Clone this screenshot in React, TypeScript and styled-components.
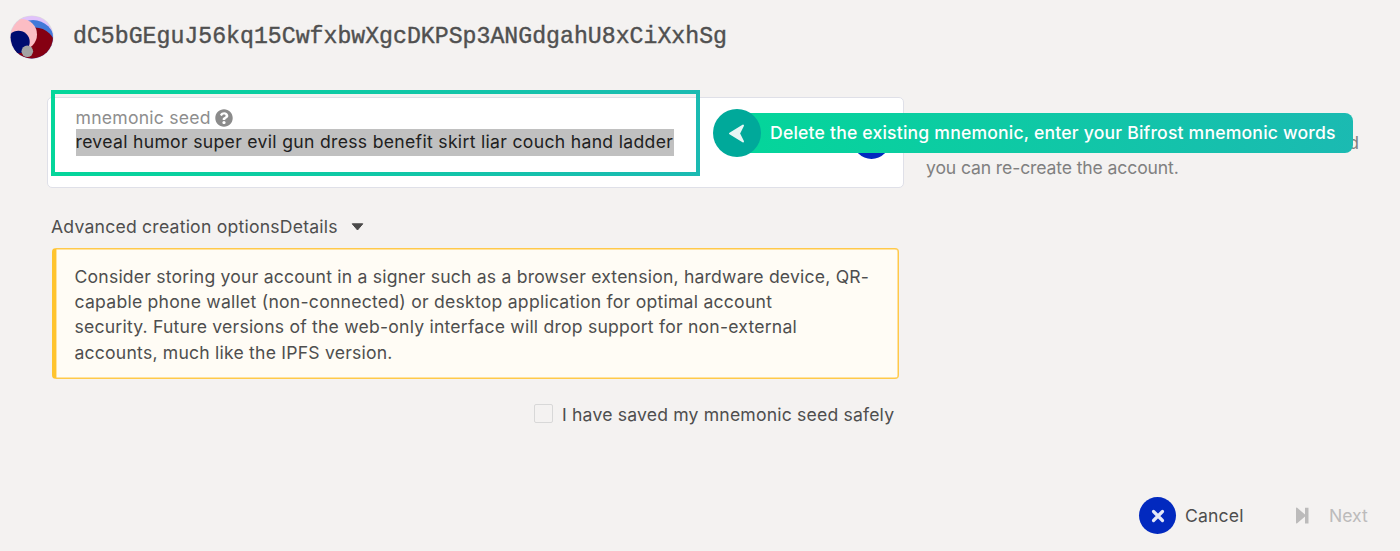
import React from "react";
import styled, { createGlobalStyle } from "styled-components";

const GlobalStyle = createGlobalStyle`
  * { box-sizing: border-box; }
  body {
    margin: 0;
    background: #f4f2f1;
    color: #4e4e4e;
    font-family: Inter, "Liberation Sans", sans-serif;
    font-size: 18px;
    line-height: 25.2px;
  }
`;

const Page = styled.main`
  position: relative;
  width: 1400px;
  height: 551px;
  overflow: hidden;
  display: flex;
  flex-direction: column;
`;

const Header = styled.header`
  display: flex;
  align-items: center;
  gap: 19px;
  height: 74px;
  padding-left: 9px;
`;

const Avatar = styled.svg`
  width: 45px;
  height: 45px;
  flex: none;
`;

const Address = styled.span`
  font-family: "Liberation Mono", monospace;
  font-size: 23.2px;
  line-height: 28px;
  color: #505050;
  -webkit-text-stroke: 0.4px #505050;
  white-space: nowrap;
`;

const Text = styled.span<{ $size?: number; $spacing?: number }>`
  display: block;
  white-space: nowrap;
  font-size: ${(p) => p.$size ?? 17.6}px;
  letter-spacing: ${(p) => p.$spacing ?? 0}px;
`;

const SeedRow = styled.section`
  display: flex;
  margin: 23px 0 0 47px;
  height: 91px;
`;

const SeedCard = styled.div`
  width: 857px;
  display: flex;
  justify-content: space-between;
  padding: 7px 13px 0 27.5px;
  background: #fff;
  border: 1px solid #dfe0e8;
  border-radius: 5px;
`;

const SeedLabel = styled.div`
  display: flex;
  align-items: center;
  gap: 4px;
  height: 25px;
  color: #8e8e8e;
`;

const Selection = styled.div`
  width: 598px;
  height: 27px;
  margin-top: -1px;
  background: #c0c0c0;
  color: #202020;
`;

const RoundButton = styled.span`
  display: flex;
  align-items: center;
  justify-content: center;
  width: 37px;
  height: 37px;
  flex: none;
  border-radius: 50%;
  background: #0229bf;
`;

const CopyButton = styled(RoundButton)`
  margin-top: 17px;
`;

const Help = styled.aside`
  display: flex;
  flex-direction: column;
  width: 433px;
  margin: 33px 0 0 22px;
  color: #808080;
`;

const HelpEnd = styled(Text)`
  align-self: flex-end;
`;

const Highlight = styled.div`
  position: absolute;
  left: 51px;
  top: 90px;
  width: 649px;
  height: 86px;
  border: 4px solid;
  border-image: linear-gradient(100deg, #04d69a, #1bbab2) 1;
`;

const Callout = styled.div`
  position: absolute;
  left: 713px;
  top: 109px;
  height: 48px;
  display: flex;
  align-items: center;
`;

const CalloutArrow = styled.span`
  z-index: 1;
  width: 48px;
  height: 48px;
  border-radius: 50%;
  background: #00a99a;
  display: flex;
  align-items: center;
  justify-content: center;
`;

const CalloutBar = styled.div`
  width: 616px;
  height: 40px;
  margin-left: -24px;
  padding: 7px 0 0 33px;
  border-radius: 0 8px 8px 0;
  background: linear-gradient(100deg, #04d69a, #1bbab2);
  color: #fff;
  font-weight: 500;
`;

const Summary = styled.div`
  display: flex;
  align-items: center;
  gap: 13px;
  height: 26px;
  margin: 26px 0 0 51px;
`;

const Warning = styled.div`
  width: 847px;
  height: 131px;
  margin: 8px 0 0 51.5px;
  padding: 15px 0 0 19px;
  border: 1px solid #ffc94a;
  border-left: 4px solid #ffc42e;
  box-shadow: inset 0 0 0 0.5px #ffc94a;
  border-radius: 4px;
  background: #fffcf5;
`;

const Confirm = styled.div`
  display: flex;
  align-items: center;
  gap: 9px;
  height: 26px;
  margin: 23px 0 0 534px;
`;

const Checkbox = styled.span`
  width: 19px;
  height: 19px;
  margin-top: -3px;
  border: 1.5px solid #d8d8d8;
  border-radius: 2px;
`;

const Actions = styled.footer`
  display: flex;
  align-items: center;
  height: 37px;
  margin: 69px 0 0 1139px;
`;

const CancelButton = styled.div`
  display: flex;
  align-items: center;
  gap: 9px;
  width: 157px;
`;

const NextButton = styled.div`
  display: flex;
  align-items: center;
  gap: 20px;
  color: #bcbbbb;
`;

export default function App() {
  return (
    <>
      <GlobalStyle />
      <Page>
        <Header>
          <Avatar viewBox="0 0 45 45">
            <defs>
              <clipPath id="disc">
                <circle cx="22.8" cy="22.2" r="21.2" />
              </clipPath>
            </defs>
            <circle cx="22.8" cy="22.2" r="21.8" fill="#dcdbda" />
            <g clipPath="url(#disc)">
              <rect width="45" height="45" fill="#e0c2fb" />
              <circle cx="24" cy="26.500" r="21.500" fill="#4279d9" />
              <circle cx="26" cy="33" r="20.500" fill="#850012" />
              <circle cx="12.500" cy="19.500" r="15.500" fill="#fcbdc4" />
              <circle cx="9.500" cy="27" r="11.200" fill="#000c70" />
              <circle cx="18.300" cy="36.300" r="5.800" fill="#a3a3a3" />
            </g>
          </Avatar>
          <Address>dC5bGEguJ56kq15CwfxbwXgcDKPSp3ANGdgahU8xCiXxhSg</Address>
        </Header>

        <SeedRow>
          <SeedCard>
            <div>
              <SeedLabel>
                <Text $spacing={0.23}>mnemonic seed</Text>
                <svg width="18" height="18" viewBox="0 0 512 512">
                  <path
                    fill="#8b8b8b"
                    d="M504 256c0 137-111 248-248 248S8 393 8 256C8 119.100 119 8 256 8s248 111.100 248 248zM262.700 90c-54.500 0-89.300 23-116.500 63.800-3.500 5.300-2.400 12.400 2.700 16.300l34.700 26.300c5.200 3.900 12.600 3 16.700-2.100 17.900-22.700 30.100-35.800 57.300-35.800 20.400 0 45.700 13.100 45.700 33 0 15-12.400 22.700-32.500 34C247.100 238.500 216 254.900 216 296v4c0 6.600 5.400 12 12 12h56c6.600 0 12-5.400 12-12v-1.300c0-28.500 83.200-29.600 83.200-106.700 0-58-60.200-102-116.500-102zM256 338c-25.400 0-46 20.600-46 46s20.600 46 46 46 46-20.600 46-46-20.600-46-46-46z"
                  />
                </svg>
              </SeedLabel>
              <Selection>
                <Text $spacing={0.31}>reveal humor super evil gun dress benefit skirt liar couch hand ladder</Text>
              </Selection>
            </div>
            <CopyButton />
          </SeedCard>
          <Help>
            <HelpEnd>keep this in a safe place, with access to the seed</HelpEnd>
            <Text $spacing={-0.13}>you can re-create the account.</Text>
          </Help>
        </SeedRow>

        <Summary>
          <Text $spacing={0.22}>Advanced creation optionsDetails</Text>
          <svg width="13" height="8" viewBox="0 0 13 8">
            <path d="M1.200 .8h10.600L6.500 7z" fill="#4a4a4a" stroke="#4a4a4a" strokeLinejoin="round" />
          </svg>
        </Summary>

        <Warning>
          <Text $spacing={0.2}>Consider storing your account in a signer such as a browser extension, hardware device, QR-</Text>
          <Text $spacing={0.24}>capable phone wallet (non-connected) or desktop application for optimal account</Text>
          <Text $spacing={0.21}>security. Future versions of the web-only interface will drop support for non-external</Text>
          <Text $spacing={0.21}>accounts, much like the IPFS version.</Text>
        </Warning>

        <Confirm>
          <Checkbox />
          <Text $spacing={0.18}>I have saved my mnemonic seed safely</Text>
        </Confirm>

        <Actions>
          <CancelButton>
            <RoundButton>
              <svg width="14" height="14" viewBox="0 0 14 14">
                <path d="M2.500 2.500l9 9M11.500 2.500l-9 9" stroke="#e4e8f8" strokeWidth="3.200" strokeLinecap="round" />
              </svg>
            </RoundButton>
            <Text $spacing={0.15}>Cancel</Text>
          </CancelButton>
          <NextButton>
            <svg width="13" height="17" viewBox="0 0 13 17">
              <path d="M0 1.500Q0 0 1.200 .8L9 7.500V.8h3.500v15.600H9V9.500l-7.800 6.700Q0 17 0 15.500z" fill="#bcbbbb" />
            </svg>
            <Text>Next</Text>
          </NextButton>
        </Actions>

        <Highlight />
        <Callout>
          <CalloutArrow>
            <svg width="18" height="20" viewBox="0 0 18 20">
              <path d="M2 10.500L15 2.500l-4 8 4 8z" fill="#e6f6f5" stroke="#e6f6f5" strokeWidth="2" strokeLinejoin="round" />
            </svg>
          </CalloutArrow>
          <CalloutBar>
            <Text $spacing={0.19}>Delete the existing mnemonic, enter your Bifrost mnemonic words</Text>
          </CalloutBar>
        </Callout>
      </Page>
    </>
  );
}
